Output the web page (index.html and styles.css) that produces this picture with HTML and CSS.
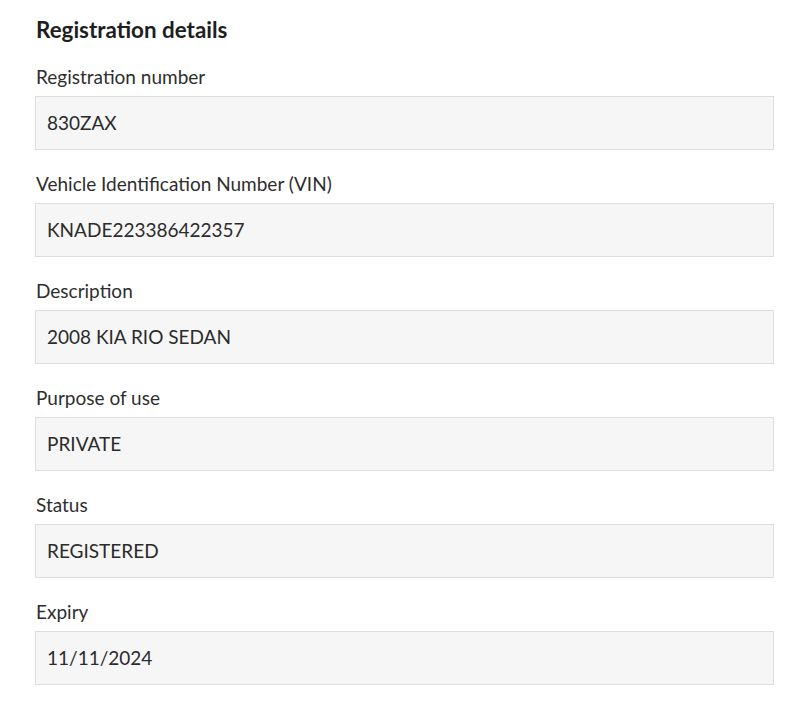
FILE: index.html
```html
<!DOCTYPE html>
<html>
<head>
<meta charset="utf-8">
<link rel="stylesheet" href="styles.css">
</head>
<body>
<section class="panel">
  <h2 class="title">Registration details</h2>
  <div class="field">
    <div class="label">Registration number</div>
    <div class="value">830ZAX</div>
  </div>
  <div class="field">
    <div class="label">Vehicle Identification Number (VIN)</div>
    <div class="value">KNADE223386422357</div>
  </div>
  <div class="field">
    <div class="label">Description</div>
    <div class="value">2008 KIA RIO SEDAN</div>
  </div>
  <div class="field">
    <div class="label">Purpose of use</div>
    <div class="value">PRIVATE</div>
  </div>
  <div class="field">
    <div class="label">Status</div>
    <div class="value">REGISTERED</div>
  </div>
  <div class="field">
    <div class="label">Expiry</div>
    <div class="value">11/11/2024</div>
  </div>
</section>
</body>
</html>
```
FILE: styles.css
```css
html, body {
  margin: 0;
  padding: 0;
  background: #ffffff;
}
body {
  font-family: Lato, "Liberation Sans", sans-serif;
  color: #2b2b2b;
}
.panel {
  width: 739px;
  padding: 18px 0 0 35px;
  display: flex;
  flex-direction: column;
}
.title {
  margin: 0 0 0 1px;
  font-size: 22.4px;
  line-height: 24px;
  font-weight: 700;
  color: #1e1e1e;
}
.field {
  display: flex;
  flex-direction: column;
  margin-top: 23px;
}
.field + .field {
  margin-top: 22px;
}
.label {
  font-size: 19px;
  line-height: 24px;
  margin-left: 1px;
  color: #2e2e2e;
  margin-bottom: 7px;
}
.value {
  box-sizing: border-box;
  height: 54px;
  display: flex;
  align-items: center;
  padding: 0 11px 2px;
  background: #f6f6f6;
  border: 1px solid #dedede;
  font-size: 19px;
  color: #2b2b2b;
}
```
